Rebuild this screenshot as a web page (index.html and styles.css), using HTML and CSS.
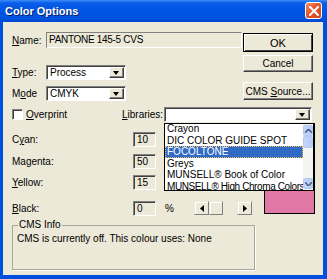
FILE: index.html
```html
<!DOCTYPE html>
<html>
  <head>
    <meta charset="utf-8">
    <title>Color Options</title>
    <link rel="stylesheet" href="styles.css">
  </head>
  <body>
    <div class="window">
      <div class="titlebar">
        <span class="title">Color Options</span>
        <span class="close">
          <svg width="10" height="10" viewBox="0 0 10 10"><path d="M1 1 L9 9 M9 1 L1 9" stroke="#fff" stroke-width="2" stroke-linecap="square"/></svg>
        </span>
      </div>
      <div class="client">
        <div class="top">
          <div class="fields">
            <div class="row name-row">
              <span class="lbl"><u>N</u>ame:</span>
              <div class="edit name-edit">PANTONE 145-5 CVS</div>
            </div>
            <div class="row type-row">
              <span class="lbl"><u>T</u>ype:</span>
              <div class="combo small"><span>Process</span><span class="arrow"></span></div>
            </div>
            <div class="row mode-row">
              <span class="lbl">M<u>o</u>de</span>
              <div class="combo small"><span>CMYK</span><span class="arrow"></span></div>
            </div>
          </div>
          <div class="buttons">
            <div class="btn default ok"><span>OK</span></div>
            <div class="btn cancel"><span>Cancel</span></div>
            <div class="btn cms"><span>CMS <u>S</u>ource...</span></div>
          </div>
        </div>

        <div class="lib-row">
          <span class="check"></span>
          <span class="lbl"><u>O</u>verprint</span>
          <span class="lbl"><u>L</u>ibraries:</span>
          <div class="combo wide"><span class="arrow"></span></div>
        </div>

        <div class="inks">
          <span class="lbl">C<u>y</u>an:</span>
          <div class="edit num">10</div>
          <span class="lbl row2">Magenta:</span>
          <div class="edit num row2">50</div>
          <span class="lbl row3"><u>Y</u>ellow:</span>
          <div class="edit num row3">15</div>
          <span class="lbl row4"><u>B</u>lack:</span>
          <div class="edit num row4">0</div>
          <span class="pct">%</span>
          <div class="slider">
            <span class="sbtn"><svg width="4" height="7" viewBox="0 0 4 7"><path d="M4 0 L0 3.5 L4 7 Z" fill="#000"/></svg></span>
            <span class="sbtn thumb"></span>
            <span class="track"></span>
            <span class="sbtn"><svg width="4" height="7" viewBox="0 0 4 7"><path d="M0 0 L4 3.5 L0 7 Z" fill="#000"/></svg></span>
          </div>
          <div class="swatch"></div>
        </div>

        <fieldset class="group">
          <legend>CMS Info</legend>
          <p>CMS is currently off. This colour uses: None</p>
        </fieldset>

        <div class="droplist">
          <div class="items">
            <div class="item">Crayon</div>
            <div class="item">DIC COLOR GUIDE SPOT</div>
            <div class="item sel">FOCOLTONE</div>
            <div class="item">Greys</div>
            <div class="item">MUNSELL® Book of Color</div>
            <div class="item tight">MUNSELL® High Chroma Colors</div>
          </div>
          <div class="vscroll">
            <span class="vbtn"><svg width="7" height="4" viewBox="0 0 7 4"><path d="M0 4 L3.5 0 L7 4" fill="none" stroke="#4d6185" stroke-width="1.5"/></svg></span>
            <span class="vbtn vthumb"></span>
            <span class="vtrack"></span>
            <span class="vbtn"><svg width="7" height="4" viewBox="0 0 7 4"><path d="M0 0 L3.5 4 L7 0" fill="none" stroke="#4d6185" stroke-width="1.5"/></svg></span>
          </div>
        </div>
      </div>
    </div>
  </body>
</html>
```

FILE: styles.css
```css
body {
  margin: 0;
  font-family: "Liberation Sans", Arial, sans-serif;
  font-size: 10px;
  color: #000;
}
.window {
  width: 327px;
  height: 279px;
  background: #0050df;
  display: flex;
  flex-direction: column;
}
.titlebar {
  height: 22px;
  display: flex;
  align-items: center;
  justify-content: space-between;
  padding: 0 5px 0 5px;
  background: linear-gradient(#3d8ef7 0px, #0a5de8 3px, #0055e5 11px, #0052dd 19px, #0046cf 22px);
}
.title {
  color: #fff;
  font-weight: bold;
  font-size: 11px;
  text-shadow: 1px 1px 0 #0a1e6a;
}
.close {
  width: 15px;
  height: 15px;
  border: 1px solid #fff;
  border-radius: 3px;
  background: linear-gradient(135deg, #f0906a, #e4562c 45%, #cc4420);
  display: flex;
  align-items: center;
  justify-content: center;
  margin-top: -1px;
}
.client {
  flex: 1;
  margin: 0 4px 4px 3px;
  background: #ece9d8;
  position: relative;
}
.lbl {
  white-space: nowrap;
}
.top {
  display: flex;
  padding: 10px 0 0 9px;
}
.fields {
  width: 231px;
}
.row {
  display: flex;
  align-items: center;
  height: 16px;
}
.row .lbl {
  width: 34px;
}
.type-row {
  margin-top: 17px;
  height: 15px;
}
.mode-row {
  margin-top: 6px;
  height: 15px;
}
.edit {
  box-sizing: border-box;
  background: #ece9d8;
  border: 1px solid;
  border-color: #808080 #fff #fff #808080;
  padding-left: 2px;
  line-height: 13px;
  white-space: nowrap;
}
.name-edit {
  width: 196px;
  height: 16px;
  letter-spacing: -0.3px;
}
.combo {
  box-sizing: border-box;
  height: 15px;
  background: #fff;
  border: 1px solid;
  border-color: #808080 #fff #fff #808080;
  box-shadow: inset 1px 1px 0 #404040;
  display: flex;
  align-items: center;
  justify-content: space-between;
  padding-left: 3px;
}
.small {
  width: 80px;
}
.arrow {
  width: 15px;
  height: 11px;
  margin-right: 1px;
  box-sizing: border-box;
  background: #ece9d8;
  border: 1px solid;
  border-color: #fff #404040 #404040 #fff;
  box-shadow: inset -1px -1px 0 #808080;
  position: relative;
}
.arrow::after {
  content: "";
  position: absolute;
  left: 3px;
  top: 3px;
  border-left: 3.5px solid transparent;
  border-right: 3.5px solid transparent;
  border-top: 4px solid #000;
}
.buttons {
  width: 70px;
  display: flex;
  flex-direction: column;
}
.btn {
  box-sizing: border-box;
  background: #ece9d8;
  border: 1px solid;
  border-color: #fff #404040 #404040 #fff;
  box-shadow: inset -1px -1px 0 #808080;
  display: flex;
  align-items: center;
  justify-content: center;
  white-space: nowrap;
}
.ok {
  margin-top: 1px;
  height: 19px;
  border: 1px solid #000;
  box-shadow: inset 1px 1px 0 #fff, inset -1px -1px 0 #404040;
  font-size: 11px;
}
.cancel {
  margin-top: 3px;
  height: 17px;
}
.cms {
  margin-top: 10px;
  height: 18px;
}
.lib-row {
  display: grid;
  grid-template-columns: 14px 96px 42px 148px;
  align-items: center;
  height: 15px;
  margin-top: 6px;
  padding-left: 9px;
}
.check {
  box-sizing: border-box;
  width: 11px;
  height: 11px;
  background: #fff;
  border: 1px solid;
  border-color: #808080 #fff #fff #808080;
  box-shadow: inset 1px 1px 0 #404040;
}
.wide {
  justify-content: flex-end;
}
.inks {
  display: grid;
  grid-template-columns: 121px 23px 38px 58px 12px 51px;
  grid-template-rows: 22px 21px 26px 15px;
  align-items: start;
  margin-top: 10px;
  padding-left: 9px;
}
.inks .lbl {
  grid-column: 1;
  line-height: 15px;
}
.num {
  grid-column: 2;
  height: 15px;
  border-color: #808080 #fff #fff #808080;
  box-shadow: inset 1px 1px 0 #404040;
  padding-left: 3px;
}
.row2 { grid-row: 2; }
.row3 { grid-row: 3; }
.row4 { grid-row: 4; }
.pct {
  grid-column: 3;
  grid-row: 4;
  padding-left: 9px;
  line-height: 15px;
}
.slider {
  grid-column: 4;
  grid-row: 4;
  display: flex;
  height: 14px;
}
.sbtn {
  box-sizing: border-box;
  width: 15px;
  height: 14px;
  border: 1px solid;
  border-color: #ece9d8 #808080 #808080 #ece9d8;
  box-shadow: inset 1px 1px 0 #fff;
  display: flex;
  align-items: center;
  justify-content: center;
}
.thumb {
  width: 14px;
}
.track {
  flex: 1;
}
.swatch {
  grid-column: 6;
  grid-row: 3 / 5;
  margin-top: 15px;
  height: 24px;
  box-sizing: border-box;
  border: 1px solid #000;
  background: #e077a4;
}
.group {
  margin: 3px 0 0 9px;
  width: 243px;
  height: 51px;
  box-sizing: border-box;
  border: 1px solid #a9a898;
  box-shadow: 1px 1px 0 #fff;
  padding: 0 4px;
}
.group legend {
  padding: 0 1px;
  margin-left: 1px;
  line-height: 12px;
}
.group p {
  margin: 2px 0 0 0;
  white-space: nowrap;
}
.droplist {
  position: absolute;
  left: 161px;
  top: 101px;
  width: 151px;
  height: 68px;
  box-sizing: border-box;
  border: 1px solid #000;
  border-right-width: 2px;
  background: #fff;
  display: flex;
  overflow: hidden;
}
.items {
  flex: 1;
  margin-top: -1px;
  overflow: hidden;
  font-size: 10px;
}
.item {
  height: 11.5px;
  line-height: 11.5px;
  padding-left: 2px;
  white-space: nowrap;
}
.tight {
  letter-spacing: -0.4px;
}
.sel {
  background: #316ac5;
  color: #fff;
  outline: 1px dotted #f0c060;
  outline-offset: -1px;
}
.vscroll {
  width: 10px;
  display: flex;
  flex-direction: column;
  background: #f4f4f0;
  padding: 1px 0;
}
.vbtn {
  box-sizing: border-box;
  height: 11px;
  border: 1px solid #b6c9f2;
  border-radius: 2px;
  background: linear-gradient(90deg, #c6d6fb, #b5cbf7);
  display: flex;
  align-items: center;
  justify-content: center;
}
.vthumb {
  height: 12px;
}
.vtrack {
  flex: 1;
}
```
